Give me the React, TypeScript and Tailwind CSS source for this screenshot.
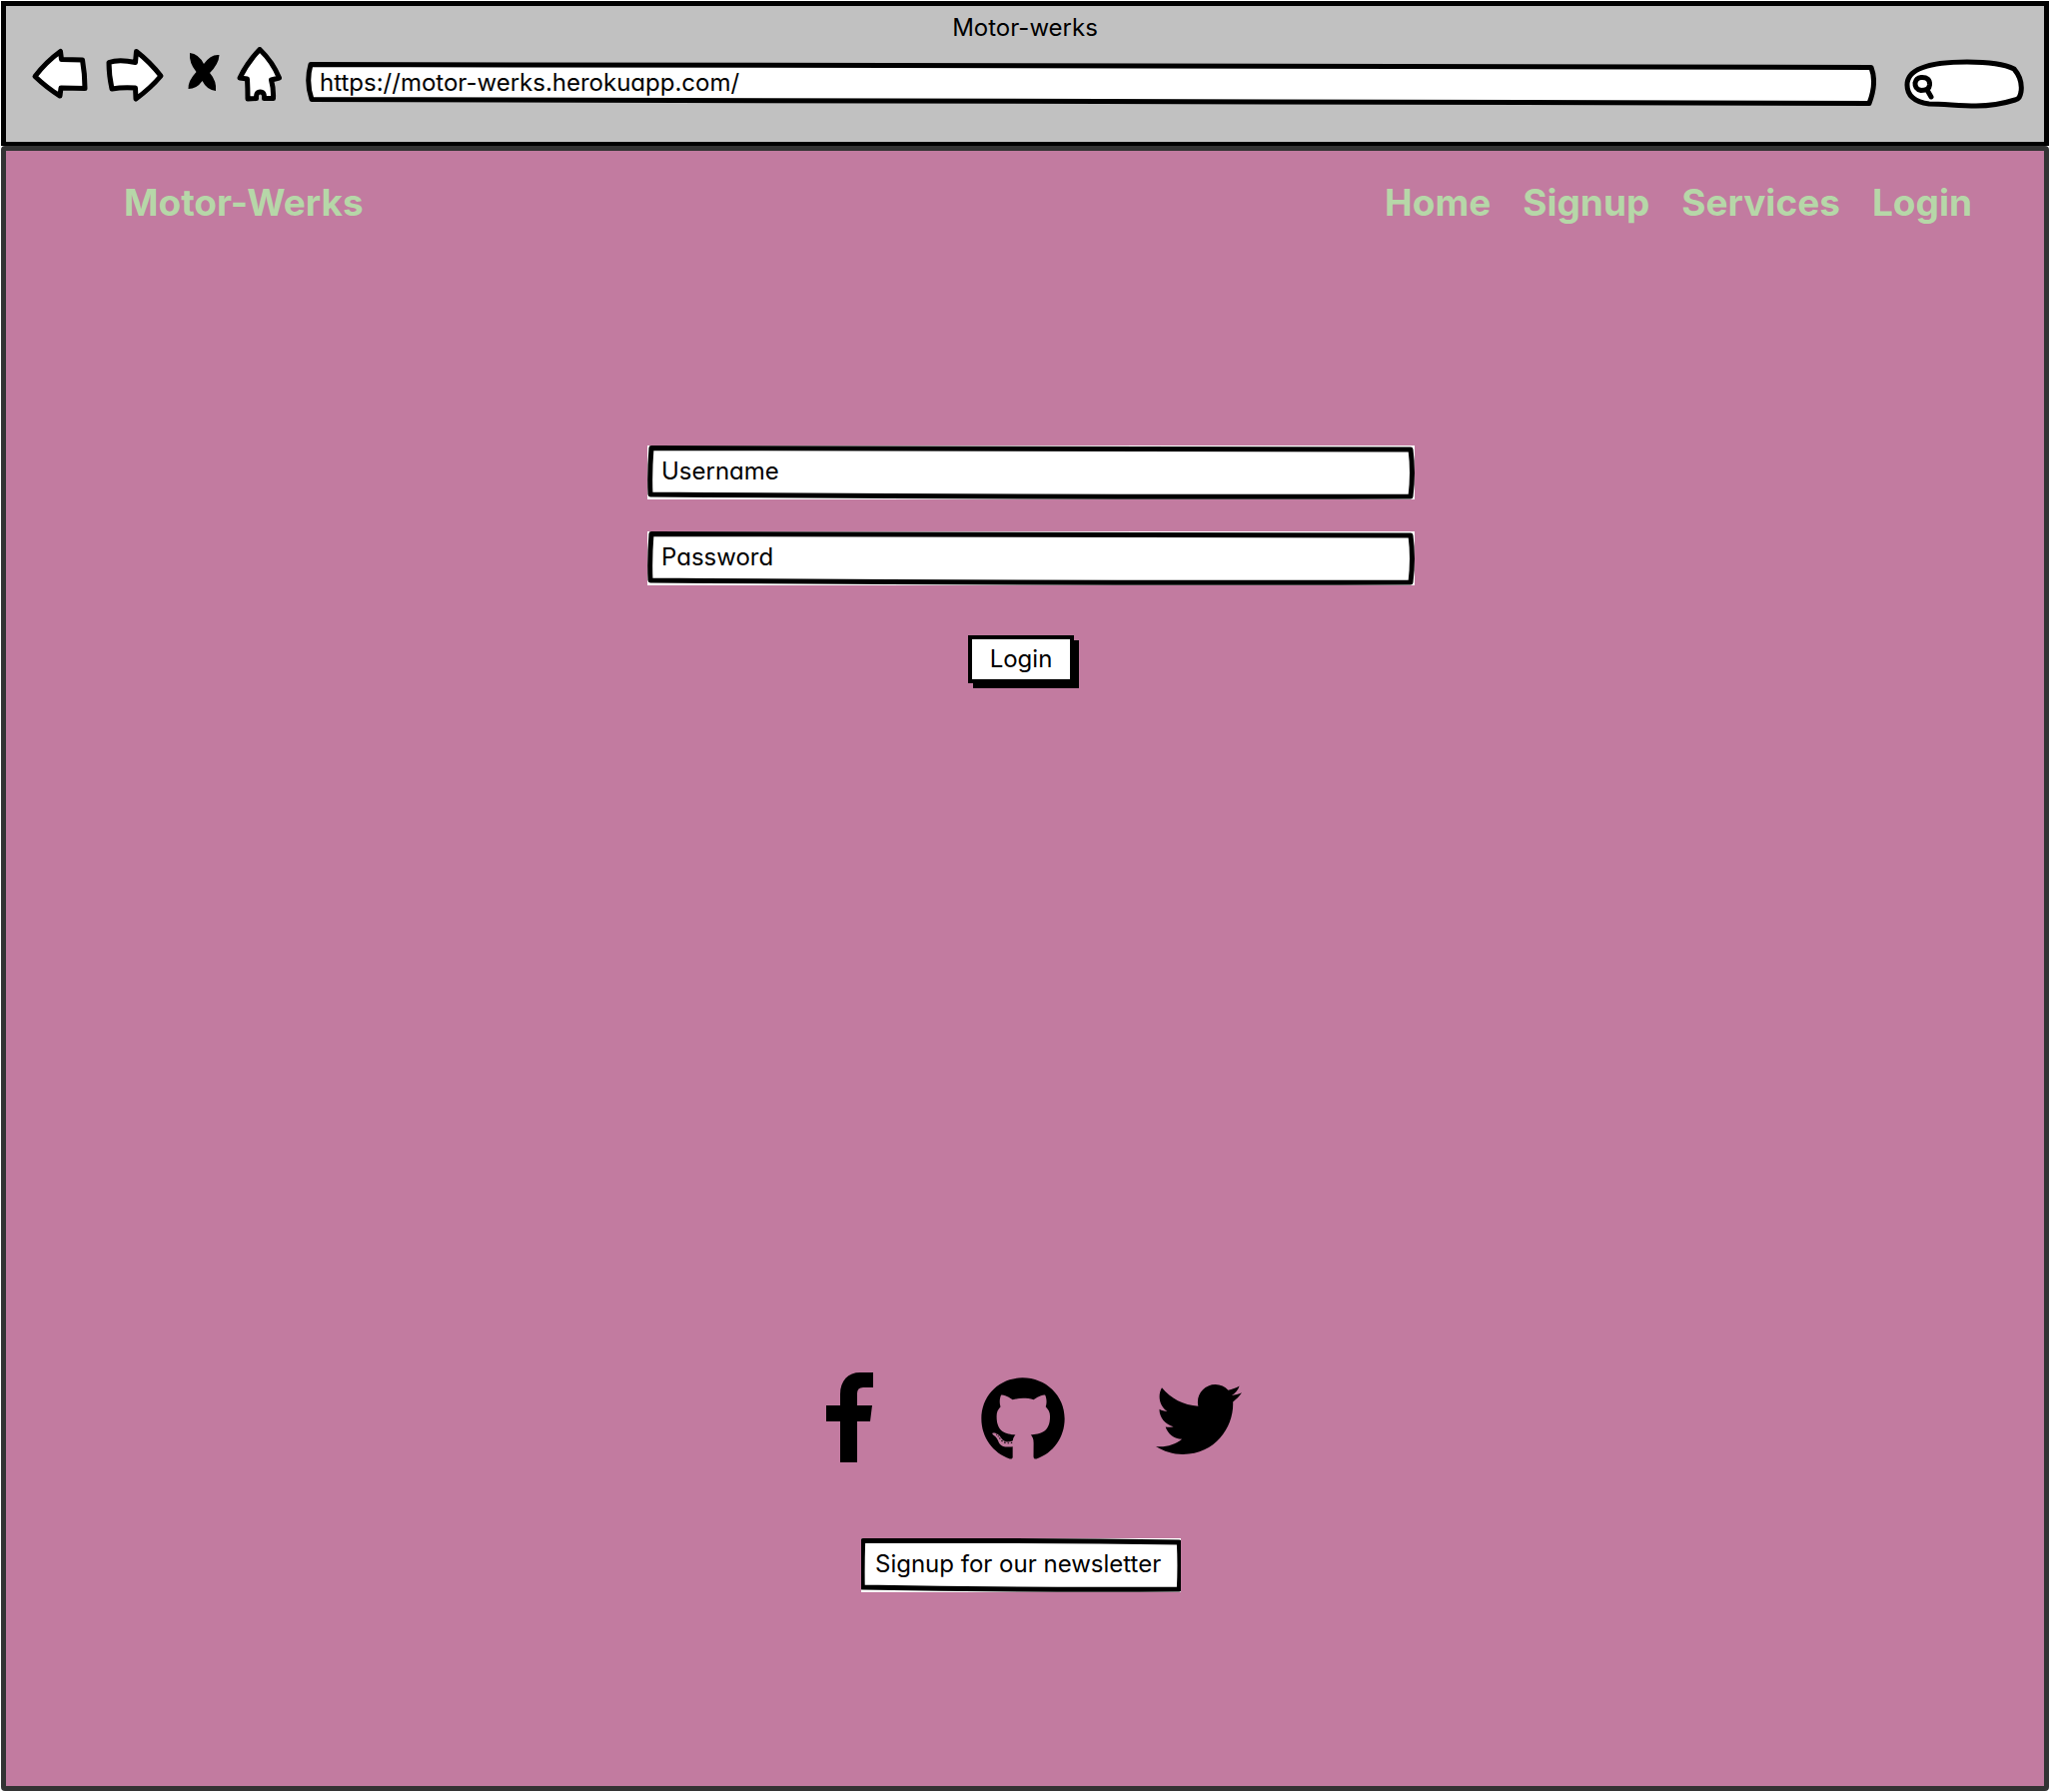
import { useState } from 'react';
import type { ReactNode } from 'react';
import { FaGithub, FaTwitter } from 'react-icons/fa';

const outline = {
  stroke: '#000',
  strokeWidth: 5,
  strokeLinejoin: 'round' as const,
  strokeLinecap: 'round' as const,
};

/** Hand-drawn outline stretched over the whole of its parent. */
function Sketch({ viewBox, d }: { viewBox: string; d: string }) {
  return (
    <svg
      className="pointer-events-none absolute inset-0 size-full"
      viewBox={viewBox}
      preserveAspectRatio="none"
      aria-hidden="true"
    >
      <path d={d} fill="#fff" vectorEffect="non-scaling-stroke" {...outline} />
    </svg>
  );
}

function ToolButton({ label, children }: { label: string; children: ReactNode }) {
  return (
    <button type="button" aria-label={label} className="shrink-0">
      {children}
    </button>
  );
}

function BrowserBar() {
  return (
    <header className="border-[5px] border-b-[4px] border-black bg-[#c1c1c1] pb-[18px]">
      <h1 className="pt-[6px] text-center text-2xl leading-8">Motor-werks</h1>
      <div className="flex h-20 items-center pr-5 pl-[25px]">
        <div className="mb-[18px] flex shrink-0 items-center">
          <ToolButton label="Back">
            <svg width="60" height="56" viewBox="30 46 60 56">
              <path
                d="M34 75.500Q45 61 59.500 50.500L60.500 58.500Q72 58.500 81.500 59Q84 73 84 87.500L60 87L59 95Q46 87 34 75.500Z"
                fill="#fff"
                {...outline}
              />
            </svg>
          </ToolButton>
          <ToolButton label="Forward">
            <svg className="ml-3" width="64" height="56" viewBox="102 46 64 56">
              <path
                d="M108 61.500Q118 58 134.500 61.500L135.500 50.500Q149 61 160 75Q150 87 135 98L134.500 87Q122 86 111 88Q108 74 108 61.500Z"
                fill="#fff"
                {...outline}
              />
            </svg>
          </ToolButton>
          <ToolButton label="Stop">
            <svg className="mb-1 ml-[15px]" width="44" height="44" viewBox="182 50 44 44">
              <path
                d="M190 52Q199 53 204 63Q211 53 219.500 54Q219 63 210 72Q217 80 216 90Q207 89 202.500 80Q197 88 188.500 88Q188 80 196.500 71Q189 62 190 52Z"
                fill="#000"
              />
            </svg>
          </ToolButton>
          <ToolButton label="Home">
            <svg className="ml-2" width="52" height="56" viewBox="234 46 52 56">
              <path
                d="M260 48.500Q273 61 279.500 77L271.500 79Q274 88 273.500 97.500L264.500 97.500Q265 91 260.500 91Q256 91 256.500 97.500L248 98Q248 88 247.500 78L240 77Q248 61 260 48.500Z"
                fill="#fff"
                {...outline}
              />
            </svg>
          </ToolButton>
        </div>
        <div className="relative ml-5 h-11 min-w-0 flex-1">
          <Sketch
            viewBox="0 0 1571 44"
            d="M5 2.500Q700 2 1566 5.500Q1572 21 1564 41.500Q500 41 6 37.500Q0 20 5 2.500Z"
          />
          <input
            type="text"
            aria-label="Address"
            defaultValue="https://motor-werks.herokuapp.com/"
            className="relative size-full bg-transparent px-[14px] pb-1 text-2xl outline-none"
          />
        </div>
        <div className="relative ml-7 h-[50px] w-[120px] shrink-0">
          <svg className="absolute inset-0" width="120" height="50" viewBox="0 0 120 50" aria-hidden="true">
            <path
              d="M3 26C3 8 30 3 63 3C85 3 100 5 110 10C116 17 118 26 117 33C116 38 115 40 111 41C95 46 85 47 72 47C55 47 40 45 25 45C10 43 3 36 3 26Z"
              fill="#fff"
              {...outline}
            />
            <path
              d="M17 18.500Q26 18 25.500 26Q25 31.500 17 31.500Q10.500 30 11 24Q12 19 17 18.500ZM23 31L27 38"
              fill="none"
              {...outline}
            />
          </svg>
          <input
            type="search"
            aria-label="Search"
            className="relative size-full bg-transparent pr-3 pl-8 text-2xl outline-none"
          />
        </div>
      </div>
    </header>
  );
}

function SketchField({ type, label }: { type: string; label: string }) {
  return (
    <div className="relative h-[54px] w-full bg-white">
      <Sketch
        viewBox="0 0 768 54"
        d="M4 2.500Q420 2 764 4Q767 27 764 51Q380 52 3 49Q2 28 4 2.500Z"
      />
      <input
        type={type}
        aria-label={label}
        placeholder={label}
        className="relative size-full bg-transparent px-[14px] pb-1 text-2xl outline-none placeholder:text-black placeholder:opacity-100"
      />
    </div>
  );
}

const links = ['Home', 'Signup', 'Services', 'Login'];

function SiteNav() {
  return (
    <nav className="flex items-center justify-between pt-7 pr-[72px] pl-[118px] text-[37px] leading-[48px] font-bold text-[#b6d7a8]">
      <a href="#">Motor-Werks</a>
      <ul className="flex gap-8">
        {links.map((link) => (
          <li key={link}>
            <a href={`#${link.toLowerCase()}`}>{link}</a>
          </li>
        ))}
      </ul>
    </nav>
  );
}

function LoginForm() {
  const [sent, setSent] = useState(false);
  return (
    <form
      className="mt-[219px] flex flex-col items-center"
      aria-busy={sent}
      onSubmit={(event) => {
        event.preventDefault();
        setSent(true);
      }}
    >
      <div className="flex w-full max-w-[780px] flex-col gap-8 pl-3">
        <SketchField type="text" label="Username" />
        <SketchField type="password" label="Password" />
      </div>
      <div className="mt-[50px] pr-2">
        <button
          type="submit"
          className="block h-12 border-4 border-black bg-white px-[18px] text-2xl leading-8 shadow-[5px_5px_0_#000]"
        >
          Login
        </button>
      </div>
    </form>
  );
}

function SiteFooter() {
  return (
    <footer className="mt-auto flex flex-col items-center pb-[194px]">
      <div className="flex items-end pl-[18px] text-black">
        <a href="#facebook" aria-label="Facebook">
          <svg width="47" height="90" viewBox="0 0 47 90">
            <path d="M14 90V49H0V33H14V22C14 8 22 0 34 0H47V15H37Q31 15 31 21V33H46L44 49H31V90Z" />
          </svg>
        </a>
        <a href="#github" aria-label="GitHub" className="ml-[107px]">
          <FaGithub size={86} />
        </a>
        <a href="#twitter" aria-label="Twitter" className="ml-[90px]">
          <FaTwitter size={86} />
        </a>
      </div>
      <div className="mt-[76px] w-[328px] pr-2">
        <SketchField type="email" label="Signup for our newsletter" />
      </div>
    </footer>
  );
}

export default function App() {
  return (
    <div className="flex min-h-screen flex-col bg-white p-px font-[Inter,sans-serif] text-black [font-feature-settings:'cv11']">
      <BrowserBar />
      <main className="flex flex-1 flex-col rounded-sm border-[5px] border-[#333] bg-[#c27ba0]">
        <SiteNav />
        <LoginForm />
        <SiteFooter />
      </main>
    </div>
  );
}
